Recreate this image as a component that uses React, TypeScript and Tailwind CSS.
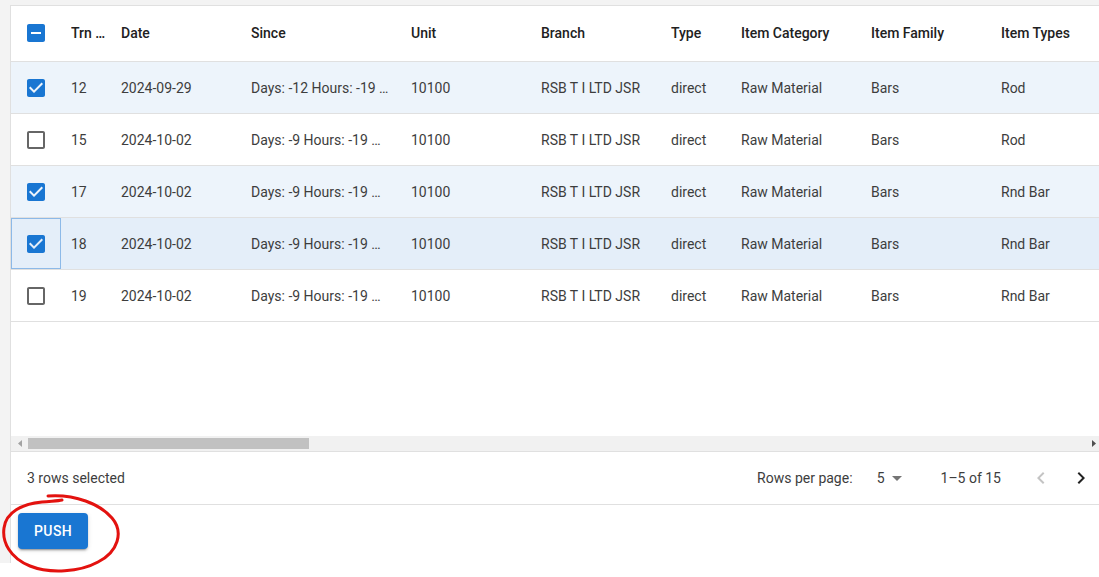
import React from "react";

type Row = {
  id: number;
  date: string;
  since: string;
  unit: string;
  branch: string;
  type: string;
  category: string;
  family: string;
  itemType: string;
  selected: boolean;
  focused?: boolean;
};

const rows: Row[] = [
  { id: 12, date: "2024-09-29", since: "Days: -12 Hours: -19 Minutes: -2", unit: "10100", branch: "RSB T I LTD JSR", type: "direct", category: "Raw Material", family: "Bars", itemType: "Rod", selected: true },
  { id: 15, date: "2024-10-02", since: "Days: -9 Hours: -19 Minutes: -10", unit: "10100", branch: "RSB T I LTD JSR", type: "direct", category: "Raw Material", family: "Bars", itemType: "Rod", selected: false },
  { id: 17, date: "2024-10-02", since: "Days: -9 Hours: -19 Minutes: -10", unit: "10100", branch: "RSB T I LTD JSR", type: "direct", category: "Raw Material", family: "Bars", itemType: "Rnd Bar", selected: true },
  { id: 18, date: "2024-10-02", since: "Days: -9 Hours: -19 Minutes: -10", unit: "10100", branch: "RSB T I LTD JSR", type: "direct", category: "Raw Material", family: "Bars", itemType: "Rnd Bar", selected: true, focused: true },
  { id: 19, date: "2024-10-02", since: "Days: -9 Hours: -19 Minutes: -10", unit: "10100", branch: "RSB T I LTD JSR", type: "direct", category: "Raw Material", family: "Bars", itemType: "Rnd Bar", selected: false },
];

const columns = [
  { label: "Trn No.", w: "w-[50px]" },
  { label: "Date", w: "w-[130px]" },
  { label: "Since", w: "w-[160px]" },
  { label: "Unit", w: "w-[130px]" },
  { label: "Branch", w: "w-[130px]" },
  { label: "Type", w: "w-[70px]" },
  { label: "Item Category", w: "w-[130px]" },
  { label: "Item Family", w: "w-[130px]" },
  { label: "Item Types", w: "w-[130px]" },
];

function Checkbox({ state }: { state: "checked" | "unchecked" | "indeterminate" }) {
  const d =
    state === "checked"
      ? "M19 3H5c-1.11 0-2 .9-2 2v14c0 1.1.89 2 2 2h14c1.11 0 2-.9 2-2V5c0-1.1-.89-2-2-2zm-9 14l-5-5 1.41-1.41L10 14.17l7.59-7.59L19 8l-9 9z"
      : state === "indeterminate"
      ? "M19 3H5c-1.1 0-2 .9-2 2v14c0 1.1.9 2 2 2h14c1.1 0 2-.9 2-2V5c0-1.1-.9-2-2-2zm-2 10H7v-2h10v2z"
      : "M19 5v14H5V5h14m0-2H5c-1.1 0-2 .9-2 2v14c0 1.1.9 2 2 2h14c1.1 0 2-.9 2-2V5c0-1.1-.9-2-2-2z";
  return (
    <svg width="24" height="24" viewBox="0 0 24 24" className={state === "unchecked" ? "fill-[#666666]" : "fill-[#1976d2]"}>
      <path d={d} />
    </svg>
  );
}

export default function App() {
  const selectedCount = rows.filter((r) => r.selected).length;

  return (
    <div className="relative h-[577px] w-[1099px] overflow-hidden bg-white font-['Roboto',sans-serif] text-sm">
      <div className="bg-[#f3f3f3] pl-[10px] pt-[5px]">
        <div className="w-[1091px] overflow-hidden border-l border-t border-[#e0e0e0] bg-white">
          {/* header */}
          <div className="flex h-[56px] items-center border-b border-[#e0e0e0] pb-[1px] font-medium text-[#212121]">
            <div className="flex w-[50px] shrink-0 justify-center">
              <Checkbox state="indeterminate" />
            </div>
            {columns.map((c, i) => (
              <div key={c.label} className={`${c.w} shrink-0 px-[10px]`}>
                <div className={i === 0 ? "w-[40px] truncate" : "truncate"}>{c.label}</div>
              </div>
            ))}
          </div>

          {/* body */}
          <div className="h-[374px]">
            {rows.map((r) => (
              <div
                key={r.id}
                className={`flex h-[52px] items-center border-b border-[#e0e0e0] text-[#3d3d3d] ${
                  r.focused ? "bg-[#e4eef9]" : r.selected ? "bg-[#edf4fb]" : "bg-white"
                }`}
              >
                <div
                  className={`flex h-full w-[50px] shrink-0 items-center justify-center ${
                    r.focused ? "outline outline-1 -outline-offset-1 outline-[#8cb9e8]" : ""
                  }`}
                >
                  <Checkbox state={r.selected ? "checked" : "unchecked"} />
                </div>
                <div className="w-[50px] shrink-0 px-[10px]">{r.id}</div>
                <div className="w-[130px] shrink-0 px-[10px]">{r.date}</div>
                <div className="w-[160px] shrink-0 px-[10px]">
                  <div className="truncate">{r.since}</div>
                </div>
                <div className="w-[130px] shrink-0 px-[10px]">{r.unit}</div>
                <div className="w-[130px] shrink-0 px-[10px]">{r.branch}</div>
                <div className="w-[70px] shrink-0 px-[10px]">{r.type}</div>
                <div className="w-[130px] shrink-0 px-[10px]">{r.category}</div>
                <div className="w-[130px] shrink-0 px-[10px]">{r.family}</div>
                <div className="w-[130px] shrink-0 px-[10px]">{r.itemType}</div>
              </div>
            ))}
          </div>

          {/* horizontal scrollbar */}
          <div className="flex h-[15px] items-center bg-[#f1f1f1]">
            <div className="flex w-[17px] justify-center">
              <svg width="4" height="7" viewBox="0 0 4 7" className="fill-[#a3a3a3]">
                <path d="M4 0v7L0 3.5z" />
              </svg>
            </div>
            <div className="h-[11px] w-[281px] bg-[#c1c1c1]" />
            <div className="flex-1" />
            <div className="flex w-[15px] justify-center">
              <svg width="4" height="7" viewBox="0 0 4 7" className="fill-[#505050]">
                <path d="M0 0v7l4-3.5z" />
              </svg>
            </div>
          </div>

          {/* footer */}
          <div className="flex h-[54px] items-center border-y border-[#e0e0e0] pb-[1px] text-[#3d3d3d]">
            <div className="pl-[16px]">
              {selectedCount} rows selected
            </div>
            <div className="ml-auto flex items-center">
              <span>Rows per page:</span>
              <div className="ml-[8px] mr-[32px] flex items-center pl-[8px]">
                <span className="w-[16px] text-right">5</span>
                <svg width="24" height="24" viewBox="0 0 24 24" className="fill-[#757575]">
                  <path d="M7 10l5 5 5-5z" />
                </svg>
              </div>
              <span>1–5 of 15</span>
              <div className="ml-[20px] flex">
                <div className="flex h-[40px] w-[40px] items-center justify-center">
                  <svg width="24" height="24" viewBox="0 0 24 24" className="fill-[#c4c4c4]">
                    <path d="M15.41 16.59 10.83 12l4.58-4.59L14 6l-6 6 6 6 1.41-1.41z" />
                  </svg>
                </div>
                <div className="flex h-[40px] w-[40px] items-center justify-center">
                  <svg width="24" height="24" viewBox="0 0 24 24" className="fill-[#222222]">
                    <path d="M8.59 16.59 13.17 12 8.59 7.41 10 6l6 6-6 6-1.41-1.41z" />
                  </svg>
                </div>
              </div>
            </div>
          </div>

          {/* actions */}
          <div className="h-[58px] pl-[7px] pt-[8px]">
            <button className="h-[36px] rounded-[4px] bg-[#1976d2] px-[16px] text-sm font-medium uppercase tracking-[0.4px] text-white shadow-[0_3px_1px_-2px_rgba(0,0,0,0.2),0_2px_2px_0_rgba(0,0,0,0.14),0_1px_5px_0_rgba(0,0,0,0.12)]">
              Push
            </button>
          </div>
        </div>
      </div>

      {/* red hand-drawn annotation */}
      <svg className="pointer-events-none absolute left-0 top-[490px]" width="130" height="87" viewBox="0 0 130 87" fill="none">
        <path
          d="M48 6 C75 4, 100 14, 112 28 C124 42, 118 62, 98 72 C80 82, 50 84, 30 76 C10 68, 2 52, 4 38 C6 22, 22 14, 42 12 C52 11, 58 11, 62 10"
          stroke="#e3120f"
          strokeWidth="3"
          strokeLinecap="round"
        />
      </svg>
    </div>
  );
}
